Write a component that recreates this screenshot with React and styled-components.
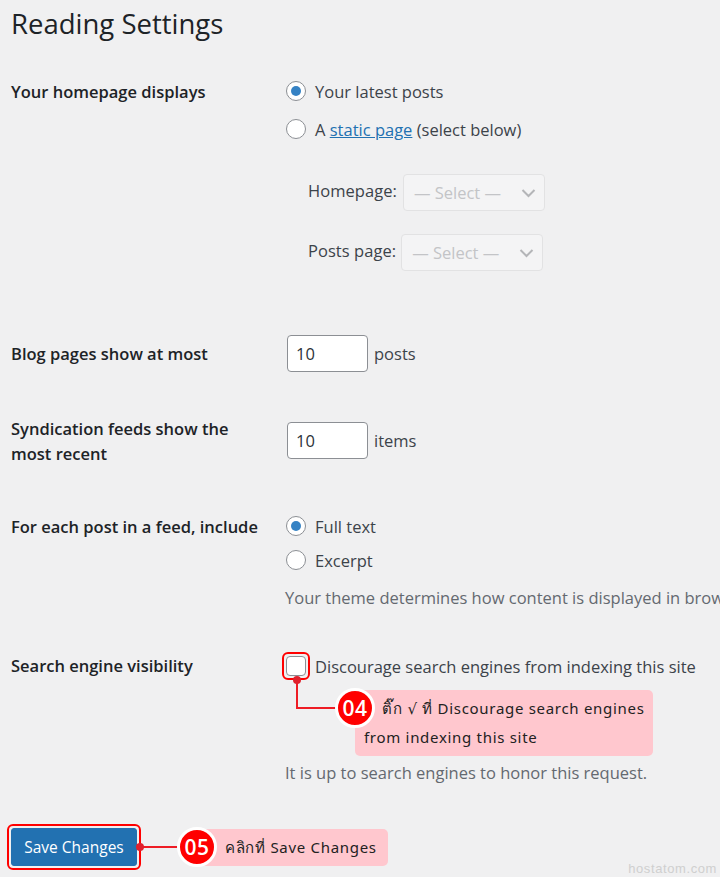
import styled, { createGlobalStyle } from "styled-components";

const Global = createGlobalStyle`
  html, body {
    margin: 0;
    padding: 0;
    background: #f0f0f1;
  }
  body {
    font-family: "Open Sans", "Noto Sans", sans-serif;
    color: #3c434a;
  }
`;

const Page = styled.div`
  position: relative;
  width: 720px;
  height: 877px;
  overflow: hidden;
  padding: 6px 0 0 11px;
  box-sizing: border-box;
  background: #f0f0f1;
`;
const Title = styled.h1`
  margin: 0 0 37px;
  font-size: 27.5px;
  line-height: 36px;
  font-weight: 400;
  color: #1d2327;
`;
const Row = styled.div`
  display: grid;
  grid-template-columns: 275px 1fr;
  margin-bottom: ${(p) => p.$gap}px;
`;
const Label = styled.div`
  font-size: 16.5px;
  line-height: 25px;
  font-weight: 600;
  color: #1d2327;
  padding-top: ${(p) => p.$top || 0}px;
`;
const Field = styled.div`
  display: flex;
  flex-direction: column;
  white-space: nowrap;
  font-size: 16.5px;
  padding-top: ${(p) => p.$top || 0}px;
`;
const Choice = styled.div`
  display: flex;
  align-items: center;
  height: 24px;
  gap: 9px;
  margin-bottom: ${(p) => p.$gap || 0}px;
`;
const Radio = styled.span`
  width: 20px;
  height: 20px;
  box-sizing: border-box;
  border-radius: 50%;
  border: 1px solid #8c8f94;
  background: #fff;
  display: flex;
  align-items: center;
  justify-content: center;
  &::before {
    content: "";
    display: ${(p) => (p.$on ? "block" : "none")};
    width: 10px;
    height: 10px;
    border-radius: 50%;
    background: #3582c4;
  }
`;
const TextLink = styled.a`
  color: #2271b1;
  text-decoration: underline;
`;
const SelectRow = styled.div`
  display: flex;
  align-items: center;
  gap: ${(p) => p.$gap}px;
  padding-left: 22px;
  margin-bottom: 23px;
`;
const SelectLabel = styled.span`
  padding-bottom: 4px;
  letter-spacing: 0.05px;
`;
const FakeSelect = styled.div`
  width: 142px;
  height: 37px;
  box-sizing: border-box;
  border: 1px solid #e2e2e3;
  border-radius: 4px;
  background: #f4f4f5;
  color: #c3c4c7;
  display: flex;
  align-items: center;
  justify-content: space-between;
  padding: 0 8px 0 10px;
`;
const Chevron = styled.svg`
  width: 15px;
  height: 10px;
  flex: none;
`;
const NumberBox = styled.div`
  width: 81px;
  height: 37px;
  margin-left: 1px;
  box-sizing: border-box;
  border: 1px solid #8c8f94;
  border-radius: 4px;
  background: #fff;
  color: #2c3338;
  padding-left: 8px;
  display: flex;
  align-items: center;
`;
const Inline = styled.div`
  display: flex;
  align-items: center;
  gap: 6px;
`;
const Hint = styled.div`
  color: #646970;
  line-height: 24px;
  margin-top: ${(p) => p.$top}px;
  margin-left: -1px;
`;
const CheckWrap = styled.span`
  position: relative;
  width: 20px;
  height: 20px;
  flex: none;
`;
const CheckBox = styled.span`
  display: block;
  width: 20px;
  height: 20px;
  box-sizing: border-box;
  border: 1px solid #8c8f94;
  border-radius: 4px;
  background: #fff;
`;
const Ring = styled.span`
  position: absolute;
  z-index: 1;
  box-sizing: border-box;
  border: 2px solid #f00;
  border-radius: 6px;
  left: ${(p) => p.$l}px;
  top: ${(p) => p.$t}px;
  right: ${(p) => p.$l}px;
  bottom: ${(p) => p.$t}px;
`;
const Dot = styled.span`
  position: absolute;
  z-index: 2;
  width: 8px;
  height: 8px;
  border-radius: 50%;
  background: #e0202c;
  left: ${(p) => p.$l}px;
  top: ${(p) => p.$t}px;
`;
const Elbow = styled.span`
  position: absolute;
  left: 10px;
  top: 22px;
  width: 40px;
  height: 31px;
  box-sizing: border-box;
  border-left: 2px solid #ee1c25;
  border-bottom: 2px solid #ee1c25;
`;
const Callout = styled.div`
  position: absolute;
  left: ${(p) => p.$l}px;
  top: ${(p) => p.$t}px;
  width: ${(p) => p.$w}px;
  box-sizing: border-box;
  padding: ${(p) => p.$pad};
  background: #ffc7ce;
  border-radius: 5px;
  color: #222;
  font-family: "Noto Sans", "DejaVu Sans", sans-serif;
  font-size: 15px;
  line-height: 29px;
  letter-spacing: 0.7px;
  white-space: nowrap;
`;
const Badge = styled.span`
  position: absolute;
  left: ${(p) => p.$l}px;
  top: ${(p) => p.$t}px;
  width: 40px;
  height: 40px;
  box-sizing: border-box;
  border: 3px solid #fff;
  border-radius: 50%;
  background: #f00;
  color: #fff;
  font-size: 21px;
  font-weight: 600;
  letter-spacing: 0.5px;
  display: flex;
  align-items: center;
  justify-content: center;
`;
const SaveWrap = styled.div`
  position: relative;
  width: 126px;
  height: 38px;
`;
const SaveButton = styled.button`
  width: 100%;
  height: 100%;
  margin: 0;
  padding: 0;
  border: 1px solid #2271b1;
  border-radius: 3px;
  background: #2271b1;
  color: #fff;
  font: inherit;
  font-size: 15.5px;
`;
const Connector = styled.span`
  position: absolute;
  left: 129px;
  top: 18px;
  width: 40px;
  height: 2px;
  background: #ee1c25;
`;
const Watermark = styled.div`
  position: absolute;
  right: 3px;
  bottom: 0;
  font-family: "Liberation Sans", sans-serif;
  font-size: 13px;
  line-height: 16px;
  letter-spacing: 0.6px;
  color: #cfcfcf;
`;

const SelectBox = () => (
  <FakeSelect>
    — Select —
    <Chevron viewBox="0 0 15 10">
      <path d="M1.5 2 L7.5 8 L13.5 2" fill="none" stroke="#b4b5b8" strokeWidth="2" />
    </Chevron>
  </FakeSelect>
);

const App = () => {
  return (
    <Page>
      <Global />
      <Title>Reading Settings</Title>

      <Row $gap={41}>
        <Label>Your homepage displays</Label>
        <Field>
          <Choice $gap={14}>
            <Radio $on />
            Your latest posts
          </Choice>
          <Choice $gap={33}>
            <Radio />
            <span>
              A <TextLink>static page</TextLink> (select below)
            </span>
          </Choice>
          <SelectRow $gap={6}>
            <SelectLabel>Homepage:</SelectLabel>
            <SelectBox />
          </SelectRow>
          <SelectRow $gap={5}>
            <SelectLabel>Posts page:</SelectLabel>
            <SelectBox />
          </SelectRow>
        </Field>
      </Row>

      <Row $gap={44}>
        <Label $top={6}>Blog pages show at most</Label>
        <Field>
          <Inline>
            <NumberBox>10</NumberBox>
            posts
          </Inline>
        </Field>
      </Row>

      <Row $gap={48}>
        <Label>
          Syndication feeds show the
          <br />
          most recent
        </Label>
        <Field $top={6}>
          <Inline>
            <NumberBox>10</NumberBox>
            items
          </Inline>
        </Field>
      </Row>

      <Row $gap={43}>
        <Label>For each post in a feed, include</Label>
        <Field>
          <Choice $gap={10}>
            <Radio $on />
            Full text
          </Choice>
          <Choice>
            <Radio />
            Excerpt
          </Choice>
          <Hint $top={14}>Your theme determines how content is displayed in browsers.</Hint>
        </Field>
      </Row>

      <Row $gap={43}>
        <Label>Search engine visibility</Label>
        <Field $top={1}>
          <Choice>
            <CheckWrap>
              <CheckBox />
              <Ring $l={-4} $t={-4} />
              <Dot $l={7} $t={20} />
              <Elbow />
            </CheckWrap>
            Discourage search engines from indexing this site
          </Choice>
          <Hint $top={83}>It is up to search engines to honor this request.</Hint>
          <Callout $l={355} $t={690} $w={298} $pad="4px 0 4px 9px">
            &nbsp;&nbsp;&nbsp;&nbsp;ติ๊ก √ ที่ Discourage search engines
            <br />
            from indexing this site
          </Callout>
          <Badge $l={335} $t={688}>04</Badge>
        </Field>
      </Row>

      <SaveWrap>
        <SaveButton>Save Changes</SaveButton>
        <Ring $l={-4} $t={-4} />
        <Connector />
        <Dot $l={125} $t={15} />
      </SaveWrap>
      <Callout $l={197} $t={829} $w={191} $pad="4px 0 4px 28px">
        คลิกที่ Save Changes
      </Callout>
      <Badge $l={177} $t={827}>05</Badge>

      <Watermark>hostatom.com</Watermark>
    </Page>
  );
};

export default App;
